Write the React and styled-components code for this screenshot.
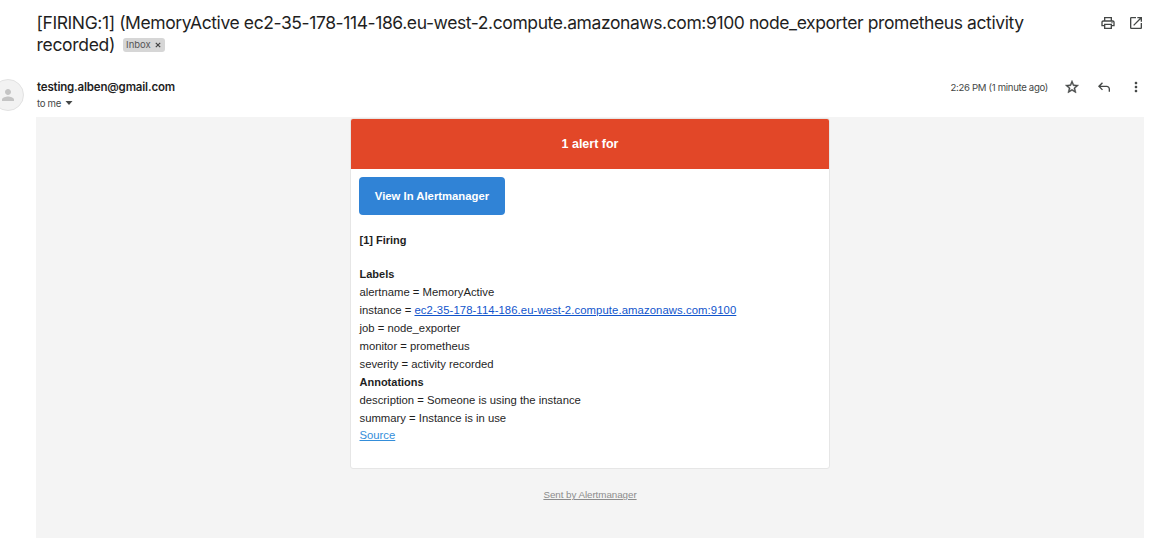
import React from "react";
import styled, { createGlobalStyle } from "styled-components";

const Global = createGlobalStyle`
  * { box-sizing: border-box; }
  body { margin: 0; background: #fff; }
`;

const Page = styled.div`
  width: 1156px;
  height: 542px;
  overflow: hidden;
  color: #1f1f1f;
  font-family: Inter, "Liberation Sans", sans-serif;
`;

const SubjectBar = styled.header`
  display: flex;
  height: 79px;
  padding: 12px 12px 0 36.5px;
`;

const Subject = styled.h1`
  flex: 1;
  margin: 0;
  font-size: 17.5px;
  font-weight: 400;
  line-height: 22px;
  white-space: nowrap;
`;

const SubjectLine = styled.div`
  display: flex;
  align-items: center;
  height: 22px;
  letter-spacing: ${(p) => p.$spacing}px;
`;

const InboxTag = styled.span`
  display: flex;
  align-items: center;
  gap: 4px;
  height: 14px;
  margin-left: 8px;
  padding: 0 4px 0 3px;
  border-radius: 3px;
  background: #d6d6d6;
  color: #555;
  font-size: 9.5px;
  line-height: 14px;
  letter-spacing: 0;
`;

const Actions = styled.div`
  display: flex;
  gap: 12px;
  padding-top: 3px;
`;

const Icon = styled.svg`
  display: block;
  flex: none;
  fill: ${(p) => p.$color || "#444746"};
`;

const MessageHead = styled.div`
  display: flex;
  height: 38px;
`;

const Avatar = styled.div`
  display: flex;
  flex: none;
  align-items: center;
  justify-content: center;
  width: 32px;
  height: 32px;
  margin-left: -8px;
  border: 1px solid #e2e2e2;
  border-radius: 50%;
  background: #f2f2f2;
`;

const Sender = styled.div`
  flex: 1;
  padding-left: 13px;
`;

const Address = styled.div`
  height: 17px;
  font-size: 11.5px;
  font-weight: 600;
  line-height: 17px;
  letter-spacing: -0.18px;
`;

const Recipient = styled.div`
  display: flex;
  align-items: center;
  gap: 4px;
  height: 14px;
  color: #444746;
  font-size: 9.6px;
  letter-spacing: -0.3px;
`;

const MessageTools = styled.div`
  display: flex;
  align-items: center;
  gap: 16px;
  height: 16px;
  padding-right: 12px;
`;

const Time = styled.span`
  color: #444746;
  font-size: 9.6px;
  letter-spacing: -0.32px;
`;

const MailBody = styled.main`
  display: flex;
  flex-direction: column;
  align-items: center;
  width: 1108px;
  height: 421px;
  margin-left: 36px;
  padding-top: 1px;
  background: #f4f4f4;
  font-family: "Liberation Sans", Arial, sans-serif;
`;

const Card = styled.section`
  width: 480px;
  height: 351px;
  border: 1px solid #e6e6e6;
  border-radius: 3px;
  background: #fff;
  overflow: hidden;
`;

const Banner = styled.div`
  height: 50px;
  background: #e24728;
  color: #fff;
  font-size: 12.5px;
  font-weight: 700;
  line-height: 50px;
  text-align: center;
`;

const CardContent = styled.div`
  padding: 8px 8px 0;
  font-size: 11px;
  line-height: 18px;
`;

const Button = styled.a`
  display: flex;
  align-items: center;
  justify-content: center;
  width: 146px;
  height: 38px;
  margin-bottom: 16px;
  border-radius: 4px;
  background: #3083d6;
  color: #fff;
  font-size: 11.3px;
  font-weight: 700;
`;

const Row = styled.div`
  height: ${(p) => p.$height || 18}px;
  padding-left: 0.5px;
  font-size: ${(p) => (p.$bold ? 11 : 11.3)}px;
  font-weight: ${(p) => (p.$bold ? 700 : 400)};
  white-space: nowrap;
`;

const Link = styled.a`
  color: ${(p) => p.$color};
  letter-spacing: ${(p) => p.$spacing || 0}px;
  text-decoration: underline;
`;

const Footer = styled.a`
  margin-top: 18px;
  color: #8c8c8c;
  font-size: 9.8px;
  line-height: 16px;
  letter-spacing: -0.05px;
  text-decoration: underline;
`;

export default function App() {
  return (
    <Page>
      <Global />
      <SubjectBar>
        <Subject>
          <SubjectLine $spacing={-0.405}>
            [FIRING:1] (MemoryActive ec2-35-178-114-186.eu-west-2.compute.amazonaws.com:9100 node_exporter prometheus activity
          </SubjectLine>
          <SubjectLine $spacing={-0.3}>
            recorded)
            <InboxTag>
              Inbox
              <Icon width="6" height="6" viewBox="0 0 6 6">
                <path d="M.8.8 5.2 5.2M5.2.8.8 5.2" stroke="#444" strokeWidth="1.2" />
              </Icon>
            </InboxTag>
          </SubjectLine>
        </Subject>
        <Actions>
          <Icon width="16" height="16" viewBox="0 0 24 24">
            <path d="M19 8h-1V3H6v5H5c-1.66 0-3 1.34-3 3v6h4v4h12v-4h4v-6c0-1.66-1.34-3-3-3zM8 5h8v3H8V5zm8 12v2H8v-4h8v2zm2-2v-2H6v2H4v-4c0-.55.45-1 1-1h14c.55 0 1 .45 1 1v4h-2z" />
            <circle cx="18" cy="11.5" r="1" />
          </Icon>
          <Icon width="16" height="16" viewBox="0 0 24 24">
            <path d="M19 19H5V5h7V3H5a2 2 0 0 0-2 2v14a2 2 0 0 0 2 2h14c1.1 0 2-.9 2-2v-7h-2v7zM14 3v2h3.59l-9.83 9.83 1.41 1.41L19 6.41V10h2V3h-7z" />
          </Icon>
        </Actions>
      </SubjectBar>
      <MessageHead>
        <Avatar>
          <Icon $color="#c4c4c4" width="18" height="18" viewBox="0 0 24 24">
            <path d="M12 12c2.21 0 4-1.79 4-4s-1.79-4-4-4-4 1.79-4 4 1.79 4 4 4zm0 2c-2.67 0-8 1.34-8 4v2h16v-2c0-2.66-5.33-4-8-4z" />
          </Icon>
        </Avatar>
        <Sender>
          <Address>testing.alben@gmail.com</Address>
          <Recipient>
            to me
            <Icon width="8" height="4" viewBox="0 0 8 4">
              <path d="M.5 0h7L4 4z" />
            </Icon>
          </Recipient>
        </Sender>
        <MessageTools>
          <Time>2:26 PM (1 minute ago)</Time>
          <Icon width="16" height="16" viewBox="0 0 24 24">
            <path stroke="#444746" strokeWidth=".6" d="M22 9.24l-7.19-.62L12 2 9.19 8.63 2 9.24l5.46 4.73L5.82 21 12 17.27 18.18 21l-1.63-7.03L22 9.24zM12 15.4l-3.76 2.27 1-4.28-3.32-2.88 4.38-.38L12 6.1l1.71 4.04 4.38.38-3.32 2.88 1 4.28L12 15.4z" />
          </Icon>
          <Icon width="16" height="16" viewBox="0 0 24 24">
            <path d="M19 19v-4c0-1.65-1.35-3-3-3H6.83l3.58 3.59L9 17l-6-6 6-6 1.41 1.41L6.83 10H16c2.76 0 5 2.24 5 5v4h-2z" />
          </Icon>
          <Icon width="16" height="16" viewBox="0 0 24 24">
            <path d="M12 8c1.1 0 2-.9 2-2s-.9-2-2-2-2 .9-2 2 .9 2 2 2zm0 2c-1.1 0-2 .9-2 2s.9 2 2 2 2-.9 2-2-.9-2-2-2zm0 6c-1.1 0-2 .9-2 2s.9 2 2 2 2-.9 2-2-.9-2-2-2z" />
          </Icon>
        </MessageTools>
      </MessageHead>
      <MailBody>
        <Card>
          <Banner>1 alert for</Banner>
          <CardContent>
            <Button>View In Alertmanager</Button>
            <Row $bold $height={34}>[1] Firing</Row>
            <Row $bold>Labels</Row>
            <Row>alertname = MemoryActive</Row>
            <Row>
              instance = <Link $color="#1155cc" $spacing={0.09}>ec2-35-178-114-186.eu-west-2.compute.amazonaws.com:9100</Link>
            </Row>
            <Row>job = node_exporter</Row>
            <Row>monitor = prometheus</Row>
            <Row>severity = activity recorded</Row>
            <Row $bold>Annotations</Row>
            <Row>description = Someone is using the instance</Row>
            <Row $height={17}>summary = Instance is in use</Row>
            <Row>
              <Link $color="#348eda">Source</Link>
            </Row>
          </CardContent>
        </Card>
        <Footer>Sent by Alertmanager</Footer>
      </MailBody>
    </Page>
  );
}
